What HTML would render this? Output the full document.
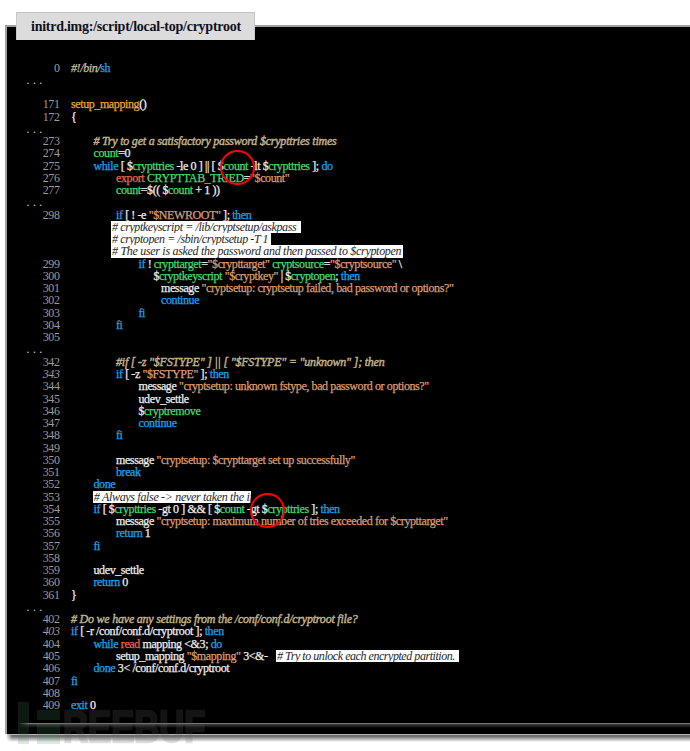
<!DOCTYPE html>
<html><head><meta charset="utf-8">
<style>
html,body{margin:0;padding:0;}
body{width:690px;height:751px;overflow:hidden;position:relative;background:#fff;font-family:"Liberation Serif",serif;}
#panel{position:absolute;left:5px;top:25px;width:700px;height:709px;background:#000;border-left:2px solid #a0a0a0;border-top:2px solid #a0a0a0;box-sizing:border-box;}
#pbot{position:absolute;left:7px;top:733.6px;width:700px;height:1.2px;background:#b4b4b4;}
#shadow{position:absolute;left:6px;top:735px;width:700px;height:7px;background:linear-gradient(#6a6a6a 0%,#6f6f6f 20%,#c8c8c8 70%,#fff 100%);-webkit-mask-image:linear-gradient(90deg,transparent,#000 6px);}
#hl{position:absolute;left:18px;top:723px;width:690px;height:1px;background:linear-gradient(90deg,rgba(112,112,112,0),rgba(120,120,120,1) 10px);}
#hl2{position:absolute;left:18px;top:724px;width:690px;height:3.5px;background:linear-gradient(rgba(64,64,64,1),rgba(0,0,0,0));-webkit-mask-image:linear-gradient(90deg,transparent,#000 12px);}
.wm{position:absolute;background:rgba(63,137,95,0.19);}
#wmt{position:absolute;left:63px;top:704px;font-family:"Liberation Sans",sans-serif;font-weight:bold;font-size:45px;line-height:45px;color:#646464;opacity:0.2;-webkit-text-stroke:2.5px #646464;transform:scaleX(0.77);transform-origin:0 0;white-space:pre;}
#tab{position:absolute;left:16px;top:12px;width:239px;height:28px;background:#dcdcdc;border-top:1px solid #c4c4c4;border-left:1px solid #c8c8c8;border-right:1px solid #c8c8c8;box-sizing:border-box;}
#tab span{position:absolute;left:14px;top:6px;font-weight:bold;font-size:14px;letter-spacing:-0.25px;color:#101020;white-space:pre;}
.num,.ln,.dots{position:absolute;font-size:12px;letter-spacing:-0.4px;line-height:12.26px;white-space:pre;}
.ln{-webkit-text-stroke:0.25px currentColor;}
.ann{position:absolute;font-size:12px;letter-spacing:-0.4px;line-height:12.26px;white-space:pre;}
.num{left:0;width:59.5px;text-align:right;color:#9c9c9c;}
.it{font-style:italic;}
.dots{left:26.5px;color:#d0d0d0;letter-spacing:0.2px}
.K{color:#18a4ec} .V{color:#44dc74} .S{color:#dc9e72} .W{color:#f0f0f0}
.C{color:#c4b68c;font-style:italic;letter-spacing:-0.22px;-webkit-text-stroke:0.4px currentColor} .F{color:#eca832} .R{color:#ec665a}
.T{color:#c8c0a0;font-style:italic}
.ann{background:#fff;color:#262626;font-style:italic;padding-left:1px;box-sizing:border-box;overflow:hidden;height:12.26px;}
.circ{position:absolute;border:2.3px solid #f00;border-radius:50%;box-sizing:border-box;}
</style></head><body>
<div id="panel"></div>
<div id="pbot"></div>
<div id="shadow"></div>
<div id="tab"><span>initrd.img:/script/local-top/cryptroot</span></div>
<div class="num" style="top:61.50px">0</div>
<div class="ln" style="top:61.50px;left:71px"><span class="T">#!/bin/</span><span class="K">sh</span></div>
<div class="dots" style="top:73.76px">. . .</div>
<div class="num" style="top:98.28px">171</div>
<div class="ln" style="top:98.28px;left:71px"><span class="F">setup_mapping</span><span class="W">()</span></div>
<div class="num" style="top:110.54px">172</div>
<div class="ln" style="top:110.54px;left:71px"><span class="W">{</span></div>
<div class="dots" style="top:122.80px">. . .</div>
<div class="num" style="top:135.06px">273</div>
<div class="ln" style="top:135.06px;left:93.5px"><span class="C"># Try to get a satisfactory password $crypttries times</span></div>
<div class="num" style="top:147.32px">274</div>
<div class="ln" style="top:147.32px;left:93.5px"><span class="V">count</span><span class="W">=0</span></div>
<div class="num" style="top:159.58px">275</div>
<div class="ln" style="top:159.58px;left:93.5px"><span class="K">while</span><span class="W"> [ </span><span class="W">$</span><span class="V">crypttries</span><span class="W"> -le 0 ] || [ </span><span class="W">$</span><span class="V">count</span><span class="W"> -lt </span><span class="W">$</span><span class="V">crypttries</span><span class="W"> ]; </span><span class="K">do</span></div>
<div class="num" style="top:171.84px">276</div>
<div class="ln" style="top:171.84px;left:116px"><span class="R">export</span><span class="W"> </span><span class="V">CRYPTTAB_TRIED</span><span class="W">=</span><span class="S">&quot;$count&quot;</span></div>
<div class="num" style="top:184.10px">277</div>
<div class="ln" style="top:184.10px;left:116px"><span class="V">count</span><span class="W">=$(( </span><span class="W">$</span><span class="V">count</span><span class="W"> + 1 ))</span></div>
<div class="dots" style="top:196.36px">. . .</div>
<div class="num" style="top:208.62px">298</div>
<div class="ln" style="top:208.62px;left:116px"><span class="K">if</span><span class="W"> [ ! -e </span><span class="S">&quot;$NEWROOT&quot;</span><span class="W"> ]; </span><span class="K">then</span></div>
<div class="num" style="top:257.66px">299</div>
<div class="ln" style="top:257.66px;left:138.5px"><span class="K">if</span><span class="W"> ! </span><span class="V">crypttarget</span><span class="W">=</span><span class="S">&quot;$crypttarget&quot;</span><span class="W"> </span><span class="V">cryptsource</span><span class="W">=</span><span class="S">&quot;$cryptsource&quot;</span><span class="W"> \</span></div>
<div class="num" style="top:269.92px">300</div>
<div class="ln" style="top:269.92px;left:153.4px"><span class="W">$</span><span class="V">cryptkeyscript</span><span class="W"> </span><span class="S">&quot;$cryptkey&quot;</span><span class="W"> | </span><span class="W">$</span><span class="V">cryptopen</span><span class="W">; </span><span class="K">then</span></div>
<div class="num" style="top:282.18px">301</div>
<div class="ln" style="top:282.18px;left:161px"><span class="W">message </span><span class="S">&quot;cryptsetup: cryptsetup failed, bad password or options?&quot;</span></div>
<div class="num" style="top:294.44px">302</div>
<div class="ln" style="top:294.44px;left:161px"><span class="K">continue</span></div>
<div class="num" style="top:306.70px">303</div>
<div class="ln" style="top:306.70px;left:138.5px"><span class="K">fi</span></div>
<div class="num" style="top:318.96px">304</div>
<div class="ln" style="top:318.96px;left:116px"><span class="K">fi</span></div>
<div class="num" style="top:331.22px">305</div>
<div class="dots" style="top:343.48px">. . .</div>
<div class="num" style="top:355.74px">342</div>
<div class="ln" style="top:355.74px;left:116px"><span class="C">#if [ -z &quot;$FSTYPE&quot; ] || [ &quot;$FSTYPE&quot; = &quot;unknown&quot; ]; then</span></div>
<div class="num it" style="top:368.00px">343</div>
<div class="ln" style="top:368.00px;left:116px"><span class="K">if</span><span class="W"> [ -z </span><span class="S">&quot;$FSTYPE&quot;</span><span class="W"> ]; </span><span class="K">then</span></div>
<div class="num" style="top:380.26px">344</div>
<div class="ln" style="top:380.26px;left:138.5px"><span class="W">message </span><span class="S">&quot;cryptsetup: unknown fstype, bad password or options?&quot;</span></div>
<div class="num" style="top:392.52px">345</div>
<div class="ln" style="top:392.52px;left:138.5px"><span class="W">udev_settle</span></div>
<div class="num" style="top:404.78px">346</div>
<div class="ln" style="top:404.78px;left:138.5px"><span class="W">$</span><span class="V">cryptremove</span></div>
<div class="num" style="top:417.04px">347</div>
<div class="ln" style="top:417.04px;left:138.5px"><span class="K">continue</span></div>
<div class="num" style="top:429.30px">348</div>
<div class="ln" style="top:429.30px;left:116px"><span class="K">fi</span></div>
<div class="num" style="top:441.56px">349</div>
<div class="num" style="top:453.82px">350</div>
<div class="ln" style="top:453.82px;left:116px"><span class="W">message </span><span class="S">&quot;cryptsetup: $crypttarget set up successfully&quot;</span></div>
<div class="num" style="top:466.08px">351</div>
<div class="ln" style="top:466.08px;left:116px"><span class="K">break</span></div>
<div class="num" style="top:478.34px">352</div>
<div class="ln" style="top:478.34px;left:93.5px"><span class="K">done</span></div>
<div class="num" style="top:490.60px">353</div>
<div class="num" style="top:502.86px">354</div>
<div class="ln" style="top:502.86px;left:93.5px"><span class="K">if</span><span class="W"> [ </span><span class="W">$</span><span class="V">crypttries</span><span class="W"> -gt 0 ] &amp;&amp; [ </span><span class="W">$</span><span class="V">count</span><span class="W"> -gt </span><span class="W">$</span><span class="V">crypttries</span><span class="W"> ]; </span><span class="K">then</span></div>
<div class="num" style="top:515.12px">355</div>
<div class="ln" style="top:515.12px;left:116px"><span class="W">message </span><span class="S">&quot;cryptsetup: maximum number of tries exceeded for $crypttarget&quot;</span></div>
<div class="num" style="top:527.38px">356</div>
<div class="ln" style="top:527.38px;left:116px"><span class="K">return</span><span class="W"> 1</span></div>
<div class="num" style="top:539.64px">357</div>
<div class="ln" style="top:539.64px;left:93.5px"><span class="K">fi</span></div>
<div class="num" style="top:551.90px">358</div>
<div class="num" style="top:564.16px">359</div>
<div class="ln" style="top:564.16px;left:93.5px"><span class="W">udev_settle</span></div>
<div class="num" style="top:576.42px">360</div>
<div class="ln" style="top:576.42px;left:93.5px"><span class="K">return</span><span class="W"> 0</span></div>
<div class="num" style="top:588.68px">361</div>
<div class="ln" style="top:588.68px;left:71px"><span class="W">}</span></div>
<div class="dots" style="top:600.94px">. . .</div>
<div class="num" style="top:613.20px">402</div>
<div class="ln" style="top:613.20px;left:71px"><span class="C"># Do we have any settings from the /conf/conf.d/cryptroot file?</span></div>
<div class="num it" style="top:625.46px">403</div>
<div class="ln" style="top:625.46px;left:71px"><span class="K">if</span><span class="W"> [ -r /conf/conf.d/cryptroot ]; </span><span class="K">then</span></div>
<div class="num" style="top:637.72px">404</div>
<div class="ln" style="top:637.72px;left:93.5px"><span class="K">while</span><span class="W"> </span><span class="R">read</span><span class="W"> mapping &lt;&amp;3; </span><span class="K">do</span></div>
<div class="num" style="top:649.98px">405</div>
<div class="ln" style="top:649.98px;left:116px"><span class="W">setup_mapping </span><span class="S">&quot;$mapping&quot;</span><span class="W"> 3&lt;&amp;-</span></div>
<div class="num" style="top:662.24px">406</div>
<div class="ln" style="top:662.24px;left:93.5px"><span class="K">done</span><span class="W"> 3&lt; /conf/conf.d/cryptroot</span></div>
<div class="num" style="top:674.50px">407</div>
<div class="ln" style="top:674.50px;left:71px"><span class="K">fi</span></div>
<div class="num" style="top:686.76px">408</div>
<div class="num" style="top:699.02px">409</div>
<div class="ln" style="top:699.02px;left:71px"><span class="K">exit</span><span class="W"> 0</span></div>
<div class="ann" style="top:220.88px;left:111px;width:189.5px;letter-spacing:-0.4px"># cryptkeyscript = /lib/cryptsetup/askpass</div>
<div class="ann" style="top:233.14px;left:111px;width:160.3px;letter-spacing:-0.4px"># cryptopen = /sbin/cryptsetup -T 1</div>
<div class="ann" style="top:245.40px;left:111px;width:291.6px;letter-spacing:-0.3px"># The user is asked the password and then passed to $cryptopen</div>
<div class="ann" style="top:490.60px;left:92.8px;width:157.8px;letter-spacing:-0.32px"># Always false -&gt; never taken the if</div>
<div class="ann" style="top:649.98px;left:276px;width:183.1px;letter-spacing:-0.45px"># Try to unlock each encrypted partition.</div>
<div class="circ" style="left:220.2px;top:149.5px;width:35.3px;height:35.2px"></div>
<div class="circ" style="left:249.5px;top:492.5px;width:35.2px;height:35.4px"></div>
<div id="hl"></div><div id="hl2"></div>
<div class="wm" style="left:18px;top:702px;width:11px;height:42px"></div>
<div class="wm" style="left:37px;top:709.5px;width:23px;height:10.5px"></div>
<div class="wm" style="left:37px;top:723px;width:23px;height:21px"></div>
<div id="wmt">REEBUF</div>
</body></html>
